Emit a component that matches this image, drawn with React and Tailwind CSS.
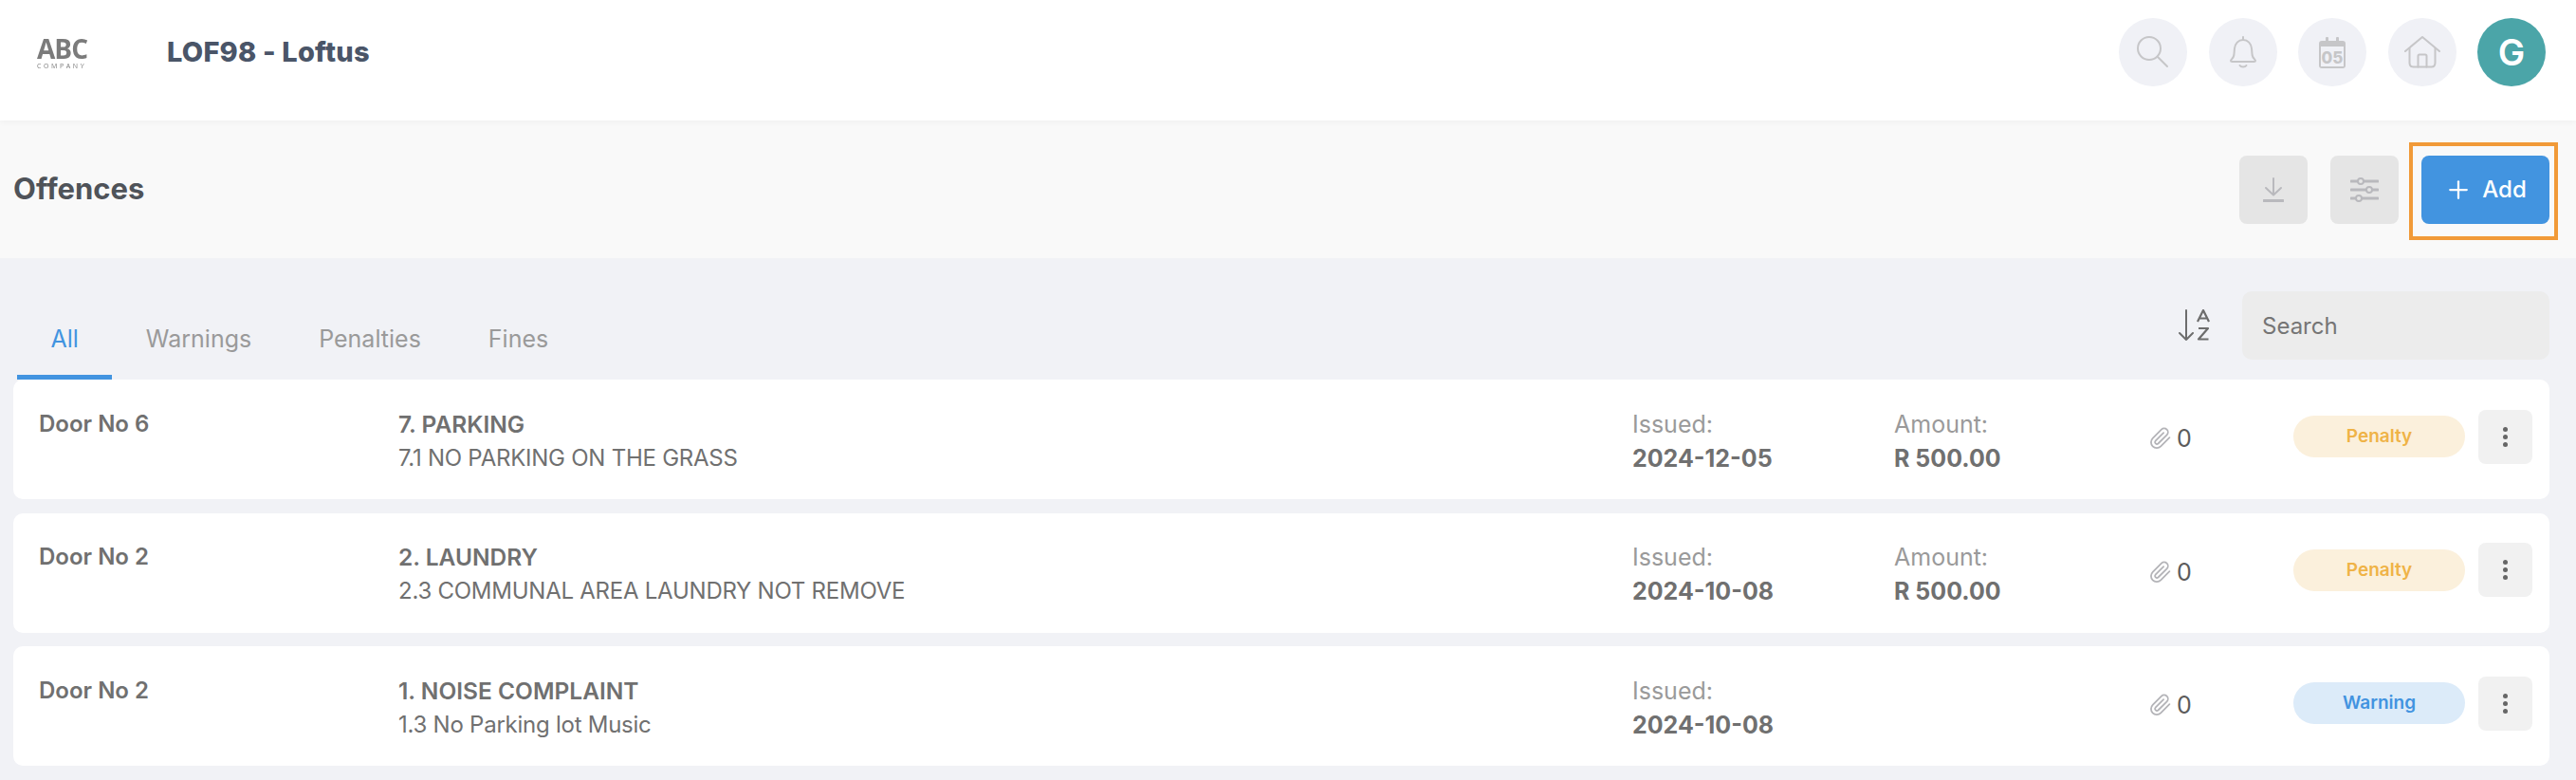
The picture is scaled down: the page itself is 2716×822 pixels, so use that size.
import React from 'react'
import { Plus } from 'lucide-react'

const offences = [
  { door: 'Door No 6', title: '7. PARKING', detail: '7.1 NO PARKING ON THE GRASS', issued: '2024-12-05', amount: 'R 500.00', type: 'Penalty' },
  { door: 'Door No 2', title: '2. LAUNDRY', detail: '2.3 COMMUNAL AREA LAUNDRY NOT REMOVE', issued: '2024-10-08', amount: 'R 500.00', type: 'Penalty' },
  { door: 'Door No 2', title: '1. NOISE COMPLAINT', detail: '1.3 No Parking lot Music', issued: '2024-10-08', amount: null, type: 'Warning' },
]

const tabs = ['All', 'Warnings', 'Penalties', 'Fines']

function CircleButton({ children }) {
  return (
    <button className="flex h-[72px] w-[72px] items-center justify-center rounded-full bg-[#f0f1f6]">
      {children}
    </button>
  )
}

function SearchIcon() {
  return (
    <svg width="34" height="34" viewBox="0 0 34 34" fill="none" stroke="#c6c6c8" strokeWidth="2" strokeLinecap="round">
      <circle cx="13" cy="13" r="12" />
      <path d="M22 22l10 10" />
    </svg>
  )
}

function BellIcon() {
  return (
    <svg width="30" height="34" viewBox="0 0 30 34" fill="none" stroke="#c6c6c8" strokeWidth="2" strokeLinecap="round" strokeLinejoin="round">
      <path d="M15 1v3" />
      <path d="M2 26c0-1 3-3 3.400-6l.6-7c.5-5 4-9 9-9s8.500 4 9 9l.6 7c.4 3 3.400 5 3.400 6 0 .8-.6 1-1.500 1H3.500C2.600 27 2 26.800 2 26z" />
      <path d="M11.500 31c1.500 2 5.500 2 7 0" />
    </svg>
  )
}

function CalendarIcon() {
  return (
    <svg width="30" height="33" viewBox="0 0 30 33">
      <rect x="8" y="0" width="3" height="6" rx="1" fill="#c6c6c8" />
      <rect x="19" y="0" width="3" height="6" rx="1" fill="#c6c6c8" />
      <rect x="1" y="4" width="28" height="29" rx="3" fill="#c6c6c8" />
      <rect x="3" y="10" width="24" height="21" fill="#f0f1f6" />
      <text x="15" y="27.500" textAnchor="middle" fontFamily="Inter, sans-serif" fontWeight="800" fontSize="17" fill="#c6c6c8">05</text>
    </svg>
  )
}

function HomeIcon() {
  return (
    <svg width="38" height="34" viewBox="0 0 38 34" fill="none" stroke="#c6c6c8" strokeWidth="2" strokeLinecap="round" strokeLinejoin="round">
      <path d="M1 16L19 1l18 15" />
      <path d="M5.500 13v15c0 3 1.500 4.500 4 4.500h19c2.500 0 4-1.500 4-4.500V13" />
      <path d="M14.500 32.500V21c0-1 .6-1.500 1.500-1.500h6c.9 0 1.500.5 1.500 1.500v11.500" />
    </svg>
  )
}

function DownloadIcon() {
  return (
    <svg width="22" height="26" viewBox="0 0 22 26" fill="none" stroke="#b9b9bd" strokeWidth="2" strokeLinecap="round" strokeLinejoin="round">
      <path d="M11 1v17" />
      <path d="M3 11l8 7.500 8-7.500" />
      <path d="M1 24.500h20" strokeWidth="3" />
    </svg>
  )
}

function SlidersIcon() {
  return (
    <svg width="30" height="28" viewBox="0 0 30 28" fill="none" stroke="#b9b9bd" strokeWidth="3" strokeLinecap="round">
      <path d="M1 5h28M1 14h28M1 23h28" />
      <circle cx="11" cy="5" r="3" fill="#e5e5e5" strokeWidth="2" />
      <circle cx="20" cy="14" r="3" fill="#e5e5e5" strokeWidth="2" />
      <circle cx="9" cy="23" r="3" fill="#e5e5e5" strokeWidth="2" />
    </svg>
  )
}

function SortIcon() {
  return (
    <svg width="34" height="34" viewBox="0 0 34 34" fill="none">
      <path d="M8 1v31M1 25l7 7 7-7" stroke="#6d6d6d" strokeWidth="2" strokeLinecap="round" strokeLinejoin="round" />
      <path d="M20 13l6-12 6 12M22 9.500h8" stroke="#6d6d6d" strokeWidth="2.200" strokeLinejoin="round" />
      <path d="M21 20h10l-10 11.500h10.500" stroke="#6d6d6d" strokeWidth="2.200" strokeLinejoin="round" />
    </svg>
  )
}

function ClipIcon() {
  return (
    <svg width="24" height="26" viewBox="0 0 24 24" fill="none" stroke="#b4b4b8" strokeWidth="1.800" strokeLinecap="round" strokeLinejoin="round">
      <path d="M21.400 11.100l-9.200 9.200a6 6 0 0 1-8.500-8.500l9.200-9.200a4 4 0 0 1 5.700 5.700l-9.200 9.200a2 2 0 0 1-2.800-2.800l8.500-8.500" />
    </svg>
  )
}

function OffenceCard({ offence }) {
  const isPenalty = offence.type === 'Penalty'

  return (
    <div className="flex h-[126px] items-center rounded-[10px] bg-white pl-[27px] pr-[18px] text-[24px] leading-[36px] text-[#707070]">
      <div className="mt-[3px] h-[72px] w-[379px] font-semibold">{offence.door}</div>
      <div className="mt-[3px] h-[72px] flex-1">
        <div className="text-[24.500px] font-semibold">{offence.title}</div>
        <div className="tracking-[-0.25px]">{offence.detail}</div>
      </div>
      <div className="mt-[3px] h-[72px] w-[276px]">
        <div className="text-[25px] text-[#9a9a9a]">Issued:</div>
        <div className="text-[25px] font-bold">{offence.issued}</div>
      </div>
      <div className="mt-[3px] h-[72px] w-[269px]">
        {offence.amount && (
          <>
            <div className="text-[25px] text-[#9a9a9a]">Amount:</div>
            <div className="text-[25px] font-bold">{offence.amount}</div>
          </>
        )}
      </div>
      <div className="mb-[2px] flex w-[152px] items-center gap-[5px] text-[25px] text-[#5c5c5c]">
        <ClipIcon />
        <span>0</span>
      </div>
      <div className={`mb-[6px] flex h-[44px] w-[181px] items-center justify-center rounded-full text-[19px] font-semibold ${isPenalty ? 'bg-[#fbf0dc] text-[#efb347]' : 'bg-[#dcebf9] text-[#4293e0]'}`}>
        {offence.type}
      </div>
      <button className="mb-[6px] ml-[14px] flex h-[57px] w-[57px] flex-col items-center justify-center gap-[3px] rounded-[8px] bg-[#f1f1f1]">
        <span className="h-[5px] w-[5px] rounded-full bg-[#666666]" />
        <span className="h-[5px] w-[5px] rounded-full bg-[#666666]" />
        <span className="h-[5px] w-[5px] rounded-full bg-[#666666]" />
      </button>
    </div>
  )
}

export default function App() {
  return (
    <div className="min-h-screen bg-[#f1f2f6] font-['Inter',sans-serif]">
      <header className="relative z-10 flex h-[127px] items-center bg-white pb-[17px] pl-[39px] pr-[32px] shadow-[0_2px_6px_rgba(0,0,0,0.04)]">
        <div className="flex w-[137px] flex-col font-['Open_Sans',sans-serif] text-[#7b7b7b] blur-[0.6px]">
          <span className="text-[28px] font-bold leading-[30px] tracking-[-1px]">ABC</span>
          <span className="text-[7px] leading-[8px] tracking-[2.600px]">COMPANY</span>
        </div>
        <h1 className="text-[29px] font-extrabold tracking-[0.2px] text-[#4a5568]">LOF98 - Loftus</h1>
        <div className="ml-auto flex items-center gap-[22.500px]">
          <CircleButton><SearchIcon /></CircleButton>
          <CircleButton><BellIcon /></CircleButton>
          <CircleButton><CalendarIcon /></CircleButton>
          <CircleButton><HomeIcon /></CircleButton>
          <div className="flex h-[72px] w-[72px] items-center justify-center rounded-full bg-[#4ba5a8] text-[38px] font-semibold text-white">G</div>
        </div>
      </header>

      <div className="flex h-[145px] items-center bg-[#f9f9f9] pl-[14px] pr-[28px]">
        <h2 className="text-[31px] font-bold text-[#4f5359]">Offences</h2>
        <div className="ml-auto flex items-center gap-[24px]">
          <button className="flex h-[72px] w-[72px] items-center justify-center rounded-[8px] bg-[#e5e5e5]"><DownloadIcon /></button>
          <button className="flex h-[72px] w-[72px] items-center justify-center rounded-[8px] bg-[#e5e5e5]"><SlidersIcon /></button>
          <div className="relative">
            <button className="flex h-[72px] w-[135px] items-center justify-center gap-[10px] rounded-[8px] bg-[#4294e0] text-[24px] font-medium text-white">
              <Plus size={30} strokeWidth={1.800} />
              Add
            </button>
            <div className="absolute left-[-13px] top-[-14px] h-[103px] w-[157px] border-4 border-[#f19a38]" />
          </div>
        </div>
      </div>

      <main className="px-[14px]">
        <div className="flex h-[128px] items-end justify-between pl-[4px] pr-[14px]">
          <nav className="flex">
            {tabs.map((tab, i) => (
              <div key={tab} className={`border-b-[5px] px-[35.500px] pb-[20px] text-[25px] leading-[36px] ${i === 0 ? 'border-[#4294e0] text-[#4294e0]' : 'border-transparent text-[#9a9a9a]'}`}>
                {tab}
              </div>
            ))}
          </nav>
          <div className="mb-[21px] flex items-center gap-[33px]">
            <SortIcon />
            <input
              placeholder="Search"
              className="h-[72px] w-[324px] rounded-[10px] bg-[#ececec] px-[21px] text-[24px] text-[#757575] outline-none placeholder:text-[#757575]"
            />
          </div>
        </div>

        <div className="flex w-[2674px] flex-col gap-[14.500px]">
          {offences.map((offence, i) => (
            <OffenceCard key={i} offence={offence} />
          ))}
        </div>
      </main>
    </div>
  )
}
